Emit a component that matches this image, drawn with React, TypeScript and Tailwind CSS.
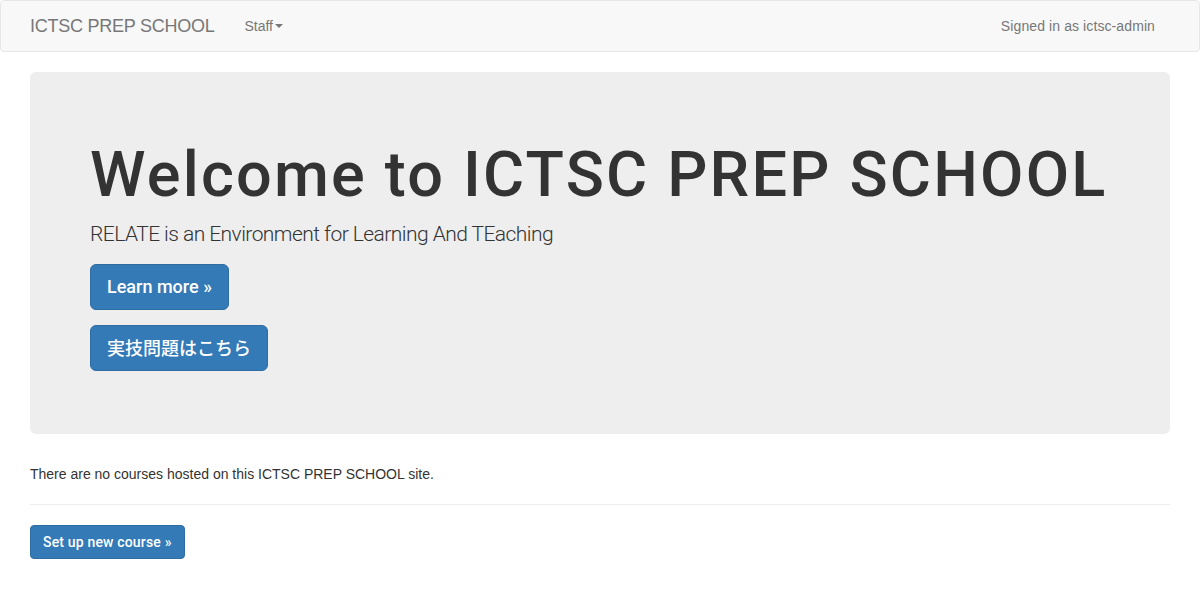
export default function App() {
  return (
    <div className="min-h-[600px] bg-white font-['Liberation_Sans','Noto_Sans_CJK_JP',sans-serif] text-[14px] leading-[20px] text-[#333]">
      <nav className="mb-5 flex h-[52px] items-stretch rounded-[4px] border border-[#e7e7e7] bg-[#f8f8f8]">
        <div className="mx-auto flex w-[1170px] items-stretch px-[15px]">
          <a className="-ml-[15px] px-[15px] py-[15px] text-[18px] leading-[20px] tracking-[-0.25px] text-[#777]">ICTSC PREP SCHOOL</a>
          <a className="flex items-center px-[15px] py-[15px] text-[#777]">
            Staff
            <span className="ml-[2px] inline-block h-0 w-0 border-x-[4px] border-t-[4px] border-x-transparent border-t-[#777]" />
          </a>
          <p className="mx-[15px] ml-auto mt-[15px] tracking-[0.1px] text-[#777]">Signed in as ictsc-admin</p>
        </div>
      </nav>

      <div className="mx-auto w-[1170px] px-[15px]">
        <div className="mb-[30px] rounded-[6px] bg-[#eeeeee] px-[60px] py-[48px]">
          <h1 className="mt-5 mb-[10px] whitespace-nowrap font-['Roboto',sans-serif] text-[63px] leading-[1.1] font-medium tracking-[2.2px] text-[#333]">
            Welcome to ICTSC PREP SCHOOL
          </h1>
          <p className="mb-[15px] font-['Roboto',sans-serif] text-[21px] leading-[30px] font-light tracking-[-0.55px]">
            RELATE is an Environment for Learning And TEaching
          </p>
          <p className="mb-[15px]">
            <a className="inline-block rounded-[6px] border border-[#2e6da4] bg-[#337ab7] px-4 py-[10px] font-['Roboto',sans-serif] text-[18px] leading-[1.3333333] font-medium text-white">
              Learn more »
            </a>
          </p>
          <p className="mb-[15px]">
            <a className="inline-block rounded-[6px] border border-[#2e6da4] bg-[#337ab7] px-4 pt-[9px] pb-[11px] font-['Noto_Sans_CJK_JP',sans-serif] text-[18px] leading-[24px] font-medium text-white">
              実技問題はこちら
            </a>
          </p>
        </div>

        <p className="mb-[10px]">There are no courses hosted on this ICTSC PREP SCHOOL site.</p>
        <hr className="mt-5 mb-5 border-t border-[#eeeeee]" />
        <a className="inline-block rounded-[4px] border border-[#2e6da4] bg-[#337ab7] px-3 py-[6px] font-['Roboto',sans-serif] text-[14px] leading-[20px] font-medium tracking-[0.17px] text-white">
          Set up new course »
        </a>
      </div>
    </div>
  );
}
